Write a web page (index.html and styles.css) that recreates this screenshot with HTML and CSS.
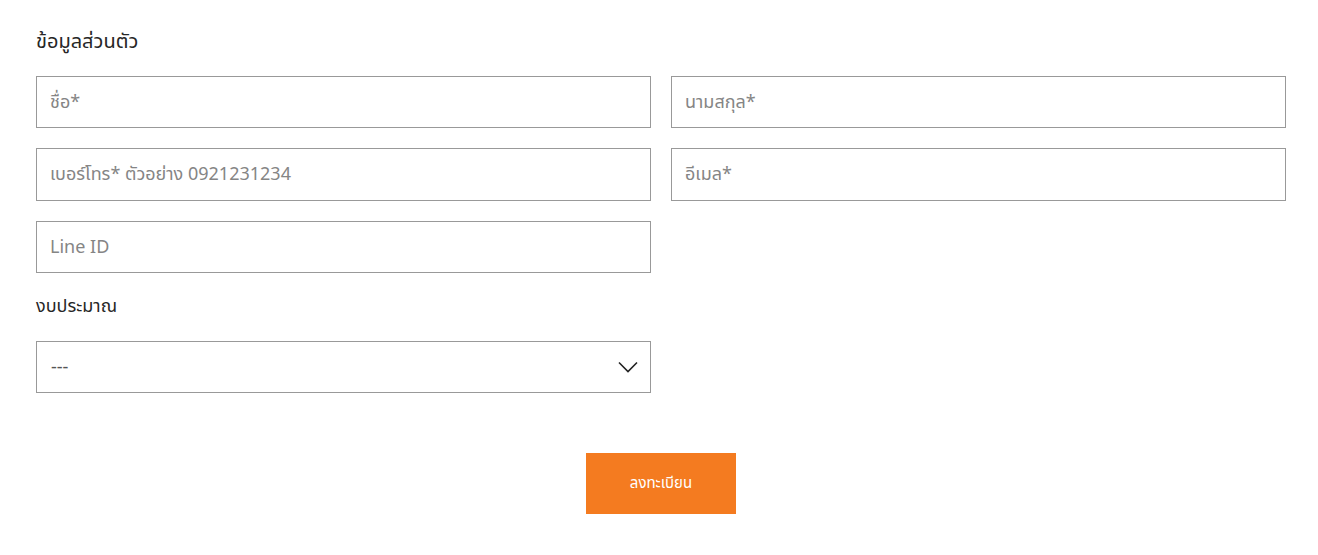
FILE: index.html
```html
<!DOCTYPE html>
<html lang="th">
<head>
<meta charset="utf-8">
<title>ข้อมูลส่วนตัว</title>
<link rel="stylesheet" href="styles.css">
</head>
<body>
<form class="form">
  <h2 class="section-title">ข้อมูลส่วนตัว</h2>
  <div class="grid grid-contact">
    <input class="field" type="text" placeholder="ชื่อ*">
    <input class="field" type="text" placeholder="นามสกุล*">
    <input class="field" type="tel" placeholder="เบอร์โทร* ตัวอย่าง 0921231234">
    <input class="field" type="email" placeholder="อีเมล*">
    <input class="field" type="text" placeholder="Line ID">
  </div>
  <label class="label">งบประมาณ</label>
  <div class="grid">
    <div class="select">
      <span class="select-value">---</span>
      <svg class="chevron" width="20" height="12" viewBox="0 0 20 12"><path d="M1 1.5 L10 10.5 L19 1.5" fill="none" stroke="#222" stroke-width="1.6"/></svg>
    </div>
  </div>
  <div class="actions">
    <button class="submit" type="button">ลงทะเบียน</button>
  </div>
</form>
</body>
</html>
```
FILE: styles.css
```css
* { box-sizing: border-box; }
html, body { margin: 0; background: #fff; }
body {
  font-family: "Noto Sans Thai", "Noto Sans", "Liberation Sans", sans-serif;
  color: #222;
}
.form {
  padding: 27px 32px 0 36px;
}
.section-title {
  margin: 0 0 19px;
  font-size: 20px;
  font-weight: 400;
  line-height: 30px;
  color: #262626;
}
.grid {
  display: grid;
  grid-template-columns: 615px 615px;
  column-gap: 20px;
  row-gap: 20px;
}
.grid-contact {
  grid-template-rows: 52px 53px 52px;
}
.field {
  height: 100%;
  min-height: 52px;
  border: 1px solid #999;
  padding: 0 13px;
  font: inherit;
  font-size: 18px;
  color: #333;
  outline: none;
  background: #fff;
}
.field::placeholder { color: #858585; }
.label {
  display: block;
  margin: 20px 0 20px;
  font-size: 18px;
  line-height: 28px;
  color: #262626;
}
.select {
  height: 52px;
  border: 1px solid #999;
  display: flex;
  align-items: center;
  justify-content: space-between;
  padding: 0 12px 0 14px;
  font-size: 18px;
  color: #555;
}
.actions {
  display: flex;
  justify-content: center;
  padding: 60px 0 0;
}
.submit {
  width: 150px;
  height: 61px;
  border: 0;
  background: #f47b20;
  color: #fff;
  font: inherit;
  font-size: 15px;
  cursor: pointer;
}
```
